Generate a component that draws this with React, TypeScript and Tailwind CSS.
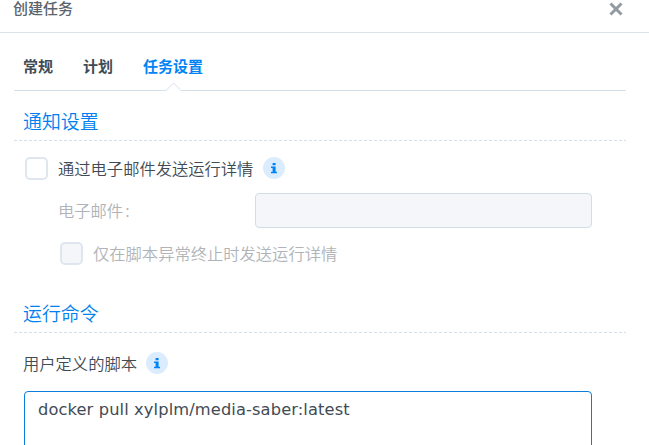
import React from "react";

function InfoIcon() {
  return (
    <svg className="size-[22px] shrink-0" viewBox="0 0 22 22" aria-hidden="true">
      <circle cx="11" cy="11" r="11" fill="#dcecff" />
      <path d="M9.6 6h3v2.3h-3zM8 9.5h4.6v5.2H14v1.5H8v-1.5h1.6V11H8z" fill="#0084f5" />
    </svg>
  );
}

function Section({ title }: { title: string }) {
  return (
    <div className="h-[26px]">
      <h2 className="h-[25px] pl-[9px] text-[18.9px] leading-[11px] font-[350] text-[#0080f0]">{title}</h2>
      <div className="h-px bg-[repeating-linear-gradient(90deg,#d4dfe9_0_3px,transparent_3px_5px)]" />
    </div>
  );
}

function Checkbox({ disabled = false }: { disabled?: boolean }) {
  return (
    <span
      className={`size-[23px] shrink-0 rounded-[5px] border-2 border-[#dfe6ee] ${disabled ? "bg-[#f4f6fa]" : "bg-white"}`}
    />
  );
}

export default function App() {
  return (
    <div className="h-[445px] w-[649px] overflow-hidden bg-white font-['Noto_Sans_CJK_SC',sans-serif] text-[16.3px] font-[350] text-[#414b55]">
      <header className="flex h-[33px] justify-between border-b border-[#dae3ec] pr-[26px] pl-[13px]">
        <h1 className="font-['DejaVu_Sans','Noto_Sans_CJK_SC',sans-serif] text-[15px] leading-[18px] font-medium text-[#5a646e]">创建任务</h1>
        <svg className="mt-[2px] size-[14px]" viewBox="0 0 14 14" aria-label="关闭">
          <path d="M1.5 1.5l11 11M12.5 1.5l-11 11" stroke="#939aa1" strokeWidth="3" />
        </svg>
      </header>

      <main className="w-[626px] pl-[14px]">
        <nav className="relative flex h-[58px] gap-[30px] border-b border-[#d4e0ea] pt-[22px] pl-[9px] text-[15px] leading-[22px] font-bold">
          <span>常规</span>
          <span>计划</span>
          <span className="text-[#0084f5]">任务设置</span>
          <svg className="absolute top-[49px] left-[151px] h-[9px] w-[17px]" viewBox="0 0 17 9">
            <path d="M0 8.5L1 8L8.5 .7L16 8L17 8.5V9H0z" fill="white" />
            <path d="M0 8.5h1L8.5 1L16 8.5h1" fill="none" stroke="#d4e0ea" />
          </svg>
        </nav>

        <section className="pt-[24px]">
          <Section title="通知设置" />
          <div className="mt-[16px] flex h-[23px] items-center pl-[11px]">
            <Checkbox />
            <span className="ml-[10px] leading-[23px]">通过电子邮件发送运行详情</span>
            <span className="ml-[10px] -translate-y-px"><InfoIcon /></span>
          </div>
          <div className="mt-[13px] flex h-[35px] items-center pl-[44px]">
            <span className="w-[197px] text-[#b0b4b9]">电子邮件<span className="ml-[2px]">:</span></span>
            <div className="h-[35px] w-[337px] rounded-[4px] border border-[#d2dde8] bg-[#f4f6fa]" />
          </div>
          <div className="mt-[14px] flex h-[23px] items-center pl-[46px] text-[#b0b4b9]">
            <Checkbox disabled />
            <span className="ml-[10px] leading-[23px]">仅在脚本异常终止时发送运行详情</span>
          </div>
        </section>

        <section className="pt-[42px]">
          <Section title="运行命令" />
          <div className="mt-[19px] flex h-[22px] items-center pl-[9px]">
            <span>用户定义的脚本</span>
            <span className="ml-[9px]"><InfoIcon /></span>
          </div>
          <div className="mt-[17px] ml-[10px] h-[80px] w-[568px] rounded-[4px] border border-[#0a7ddd] px-[13px] pt-[7px] font-['DejaVu_Sans',sans-serif] text-[16.25px] leading-[22px] font-normal tracking-[0.12px]">
            docker pull xylplm/media-saber:latest
          </div>
        </section>
      </main>
    </div>
  );
}
